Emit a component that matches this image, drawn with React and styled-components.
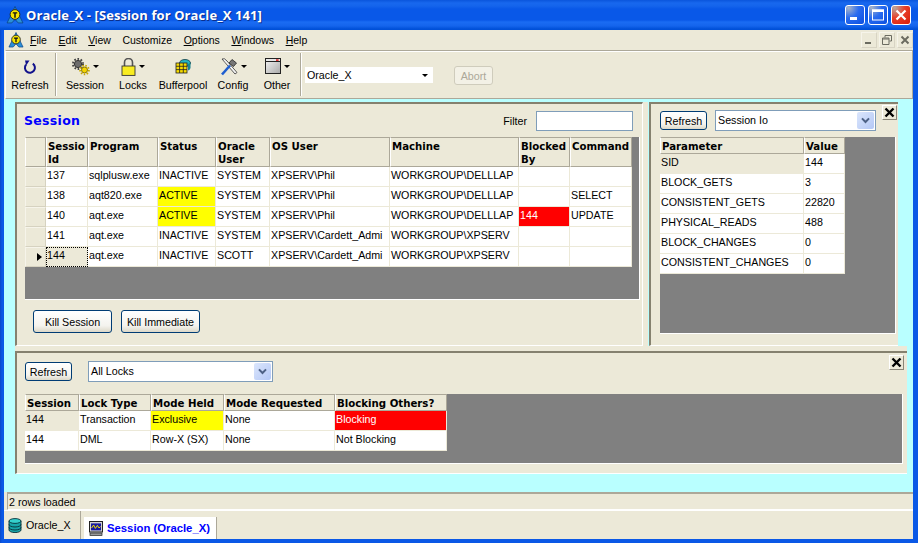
import React from 'react'
import styled, { createGlobalStyle } from 'styled-components'

const cream = '#ece9d8'
const edge = '#aca899'

const GlobalStyle = createGlobalStyle`
  html, body { margin: 0; padding: 0; background: #0a52dc; }
  body { font-family: "Liberation Sans", Arial, sans-serif; font-size: 10.7px; color: #000; }
`

const sessionCols = [21, 42, 70, 58, 54, 120, 129, 51, 62]
const sessionHead = ['', 'Sessio\nId', 'Program', 'Status', 'Oracle\nUser', 'OS User', 'Machine', 'Blocked\nBy', 'Command']
const sessionRows = [
  ['137', 'sqlplusw.exe', 'INACTIVE', 'SYSTEM', 'XPSERV\\Phil', 'WORKGROUP\\DELLLAP', '', ''],
  ['138', 'aqt820.exe', 'ACTIVE', 'SYSTEM', 'XPSERV\\Phil', 'WORKGROUP\\DELLLAP', '', 'SELECT'],
  ['140', 'aqt.exe', 'ACTIVE', 'SYSTEM', 'XPSERV\\Phil', 'WORKGROUP\\DELLLAP', '144', 'UPDATE'],
  ['141', 'aqt.exe', 'INACTIVE', 'SYSTEM', 'XPSERV\\Cardett_Admi', 'WORKGROUP\\XPSERV', '', ''],
  ['144', 'aqt.exe', 'INACTIVE', 'SCOTT', 'XPSERV\\Cardett_Admi', 'WORKGROUP\\XPSERV', '', ''],
]

const ioCols = [144, 41]
const ioRows = [
  ['SID', '144'],
  ['BLOCK_GETS', '3'],
  ['CONSISTENT_GETS', '22820'],
  ['PHYSICAL_READS', '488'],
  ['BLOCK_CHANGES', '0'],
  ['CONSISTENT_CHANGES', '0'],
]

const lockCols = [54, 72, 73, 111, 112]
const lockHead = ['Session', 'Lock Type', 'Mode Held', 'Mode Requested', 'Blocking Others?']
const lockRows = [
  ['144', 'Transaction', 'Exclusive', 'None', 'Blocking'],
  ['144', 'DML', 'Row-X (SX)', 'None', 'Not Blocking'],
]

const menus = [
  ['F', 'ile'],
  ['E', 'dit'],
  ['V', 'iew'],
  ['', 'Customize'],
  ['O', 'ptions'],
  ['W', 'indows'],
  ['H', 'elp'],
]

function AppLogo({ size = 17 }) {
  return (
    <svg width={size} height={size} viewBox="0 0 17 17">
      <path d="M8.5 0.5 L16 16 L11.5 16 L8.5 12.5 L5.5 16 L1 16 Z" fill="#2a8fd8" stroke="#0a3f80" strokeWidth="0.7" />
      <circle cx="8.5" cy="8" r="4.6" fill="#f6e400" stroke="#222" strokeWidth="0.9" />
      <path d="M6.4 5.8 H10.6 V7.1 H9.2 V11 H7.8 V7.1 H6.4 Z" fill="#111" />
    </svg>
  )
}

function RefreshIcon() {
  return (
    <svg width="16" height="18" viewBox="0 0 16 18">
      <path d="M10.8 5.6 A5 5 0 1 1 4 6.6" fill="none" stroke="#12128c" strokeWidth="2" />
      <path d="M3 2.5 L7.5 2.5 L4.2 7.5 Z" fill="#12128c" />
    </svg>
  )
}

function GearsIcon() {
  return (
    <svg width="18" height="18" viewBox="0 0 18 18">
      <circle cx="6" cy="6" r="3.6" fill="#6d6d6d" stroke="#333" strokeWidth="1" />
      <circle cx="6" cy="6" r="5" fill="none" stroke="#444" strokeWidth="2" strokeDasharray="1.6 1.6" />
      <circle cx="12.5" cy="12" r="3" fill="#f3d400" stroke="#6b5c00" strokeWidth="0.8" />
      <circle cx="12.5" cy="12" r="4.4" fill="none" stroke="#c8a800" strokeWidth="1.8" strokeDasharray="1.5 1.5" />
    </svg>
  )
}

function LockIcon() {
  return (
    <svg width="15" height="18" viewBox="0 0 15 18">
      <path d="M3.5 8 V4.5 A4 4 0 0 1 11.5 4.5 V8" fill="none" stroke="#555" strokeWidth="1.6" />
      <rect x="1" y="8" width="13" height="9.4" fill="#f8ec20" stroke="#333" strokeWidth="0.9" />
    </svg>
  )
}

function BufferIcon() {
  return (
    <svg width="16" height="16" viewBox="0 0 16 16">
      <ellipse cx="10" cy="5" rx="5.5" ry="3.5" fill="#25b5c0" stroke="#0a3a44" strokeWidth="0.8" />
      <path d="M15.5 5 V10 Q15 12 13 12.5 V6 Z" fill="#1a8490" />
      <rect x="1" y="5" width="11" height="10" fill="#f7dc00" stroke="#222" strokeWidth="0.8" />
      <path d="M4.6 5 V15 M8.3 5 V15 M1 8.3 H12 M1 11.6 H12" stroke="#222" strokeWidth="0.8" />
    </svg>
  )
}

function ToolsIcon() {
  return (
    <svg width="18" height="18" viewBox="0 0 18 18">
      <path d="M2 1 L5 4.5 L15 16 L17 14.5 L7 3 L4.5 0.8 Z" fill="#f4f4f4" stroke="#333" strokeWidth="0.8" />
      <path d="M2 16.5 L10 7.5" stroke="#1f5fd0" strokeWidth="2.6" />
      <path d="M9 5 L12 1.5 L16.5 5 L13.5 8.5 Z" fill="#777" stroke="#222" strokeWidth="0.8" />
    </svg>
  )
}

function WindowIcon() {
  return (
    <svg width="16" height="16" viewBox="0 0 16 16">
      <defs>
        <linearGradient id="winFill" x1="0" y1="0" x2="1" y2="1">
          <stop offset="0" stopColor="#f5f5f5" />
          <stop offset="1" stopColor="#a9a9a9" />
        </linearGradient>
      </defs>
      <rect x="0.5" y="0.5" width="15" height="15" fill="url(#winFill)" stroke="#222" />
      <rect x="1" y="1" width="14" height="2.5" fill="#e8e8e8" />
      <path d="M0.5 3.5 H15.5" stroke="#222" />
      <rect x="11" y="1.3" width="2.6" height="1.6" fill="#d22" />
    </svg>
  )
}

function DbIcon() {
  return (
    <svg width="14" height="15" viewBox="0 0 14 15">
      <path d="M1 3 V12 A6 2.6 0 0 0 13 12 V3 Z" fill="#17a5a8" stroke="#062f38" strokeWidth="0.9" />
      <ellipse cx="7" cy="3" rx="6" ry="2.4" fill="#35d0cc" stroke="#062f38" strokeWidth="0.9" />
      <path d="M1 6.4 A6 2.6 0 0 0 13 6.4 M1 9.4 A6 2.6 0 0 0 13 9.4" fill="none" stroke="#062f38" strokeWidth="0.9" />
    </svg>
  )
}

function MonitorIcon() {
  return (
    <svg width="14" height="15" viewBox="0 0 14 15">
      <rect x="0.5" y="0.5" width="13" height="10.5" fill="#d0d0d0" stroke="#222" />
      <rect x="2" y="2.4" width="10" height="7" fill="#1818a0" />
      <path d="M2.6 7 L4.6 4 L6.4 7.4 L8.4 4.4 L10 7 L11.6 5.6" fill="none" stroke="#f4e000" strokeWidth="1" />
      <rect x="1" y="12" width="12" height="2.4" fill="#9a9a9a" stroke="#222" strokeWidth="0.7" />
    </svg>
  )
}

function Chevron() {
  return (
    <svg width="9" height="7" viewBox="0 0 9 7">
      <path d="M1 1.4 L4.5 5 L8 1.4" fill="none" stroke="#4d6185" strokeWidth="2" />
    </svg>
  )
}

function GridCell({ value, frozen, blockedCol }) {
  const tone = value === 'ACTIVE' || value === 'Exclusive'
    ? 'yellow'
    : (blockedCol && value === '144') || value === 'Blocking'
      ? 'red'
      : frozen
        ? 'cream'
        : 'plain'
  return <Cell $tone={tone}>{value}</Cell>
}

function Select({ value, width }) {
  return (
    <SelectBox $width={width}>
      <SelectText>{value}</SelectText>
      <SelectArrow><Chevron /></SelectArrow>
    </SelectBox>
  )
}

function App() {
  return (
    <>
      <GlobalStyle />
      <Win>
        <TitleBar>
          <AppLogo size={18} />
          <TitleText>Oracle_X - [Session for Oracle_X 141]</TitleText>
          <CaptionGroup>
            <CaptionBtn>
              <svg width="18" height="18" viewBox="0 0 18 18"><rect x="4" y="11" width="7" height="3" fill="#fff" /></svg>
            </CaptionBtn>
            <CaptionBtn>
              <svg width="18" height="18" viewBox="0 0 18 18"><rect x="3.5" y="4" width="11" height="10" fill="none" stroke="#fff" /><rect x="3" y="3.5" width="12" height="2.5" fill="#fff" /></svg>
            </CaptionBtn>
            <CaptionBtn $close>
              <svg width="18" height="18" viewBox="0 0 18 18"><path d="M4.5 4.5 L13.5 13.5 M13.5 4.5 L4.5 13.5" stroke="#fff" strokeWidth="2.2" /></svg>
            </CaptionBtn>
          </CaptionGroup>
        </TitleBar>

        <Body>
          <MenuBar>
            <AppLogo size={16} />
            <MenuList>
              {menus.map(([key, rest]) => (
                <MenuItem key={rest}><u>{key}</u>{rest}</MenuItem>
              ))}
            </MenuList>
            <MdiGroup>
              <MdiBtn>
                <svg width="12" height="12" viewBox="0 0 12 12"><rect x="2" y="8" width="6" height="2" fill="#6b6b60" /></svg>
              </MdiBtn>
              <MdiBtn>
                <svg width="12" height="12" viewBox="0 0 12 12"><path d="M4 3.5 V1.5 H10.5 V7 H8.5 M1.5 4 H8 V10.5 H1.5 Z M1.5 5 H8" fill="none" stroke="#6b6b60" /></svg>
              </MdiBtn>
              <MdiBtn>
                <svg width="12" height="12" viewBox="0 0 12 12"><path d="M2.5 2.5 L9.5 9.5 M9.5 2.5 L2.5 9.5" stroke="#6b6b60" strokeWidth="2" /></svg>
              </MdiBtn>
            </MdiGroup>
          </MenuBar>

          <ToolBar>
            <ToolBtn $w={44}>
              <ToolIcon><RefreshIcon /></ToolIcon>
              Refresh
            </ToolBtn>
            <ToolSep $after={4} />
            <ToolBtn $w={48}>
              <ToolIcon><GearsIcon /><DropMark /></ToolIcon>
              Session
            </ToolBtn>
            <ToolBtn $w={48}>
              <ToolIcon><LockIcon /><DropMark /></ToolIcon>
              Locks
            </ToolBtn>
            <ToolBtn $w={52}>
              <ToolIcon><BufferIcon /></ToolIcon>
              Bufferpool
            </ToolBtn>
            <ToolBtn $w={48}>
              <ToolIcon><ToolsIcon /><DropMark /></ToolIcon>
              Config
            </ToolBtn>
            <ToolBtn $w={40}>
              <ToolIcon><WindowIcon /><DropMark /></ToolIcon>
              Other
            </ToolBtn>
            <ToolSep $after={3} />
            <ToolCombo>
              <span>Oracle_X</span>
              <ComboMark />
            </ToolCombo>
            <AbortBtn>Abort</AbortBtn>
          </ToolBar>

          <Client>
            <TopRow>
              <SessionPanel>
                <SessionHeader>
                  <PanelTitle>Session</PanelTitle>
                  <FilterLabel>Filter</FilterLabel>
                  <FilterInput />
                </SessionHeader>
                <Grid $height={163}>
                  <HeadRow $cols={sessionCols} $height={30}>
                    {sessionHead.map((h, i) => <HeadCell key={i}>{h}</HeadCell>)}
                  </HeadRow>
                  {sessionRows.map((row, r) => (
                    <Row key={r} $cols={sessionCols}>
                      <RowHeader>{r === 4 && <RowMarker />}</RowHeader>
                      {row.map((value, c) =>
                        r === 4 && c === 0
                          ? <FocusCell key={c}>{value}</FocusCell>
                          : <GridCell key={c} value={value} blockedCol={c === 6} />
                      )}
                    </Row>
                  ))}
                </Grid>
                <KillRow>
                  <Button $w={79} $h={23}>Kill Session</Button>
                  <Button $w={79} $h={23}>Kill Immediate</Button>
                </KillRow>
              </SessionPanel>

              <Splitter />

              <IoPanel>
                <CloseBtn $top={1} $right={1}>
                  <svg width="11" height="11" viewBox="0 0 11 11"><path d="M1.5 1.5 L9.5 9.5 M9.5 1.5 L1.5 9.5" stroke="#000" strokeWidth="2.4" /></svg>
                </CloseBtn>
                <IoHeader>
                  <Button $w={47} $h={19}>Refresh</Button>
                  <Select value="Session Io" width={161} />
                </IoHeader>
                <Grid $height={197}>
                  <HeadRow $cols={ioCols} $height={17}>
                    <HeadCell>Parameter</HeadCell>
                    <HeadCell>Value</HeadCell>
                  </HeadRow>
                  {ioRows.map((row, r) => (
                    <Row key={row[0]} $cols={ioCols}>
                      {row.map((value, c) => (
                        <GridCell key={c} value={value} frozen={r === 0 && c === 0} />
                      ))}
                    </Row>
                  ))}
                </Grid>
              </IoPanel>
            </TopRow>

            <LockDock>
              <LockPanel>
                <CloseBtn $top={2} $right={3}>
                  <svg width="11" height="11" viewBox="0 0 11 11"><path d="M1.5 1.5 L9.5 9.5 M9.5 1.5 L1.5 9.5" stroke="#000" strokeWidth="2.4" /></svg>
                </CloseBtn>
                <LockHeader>
                  <Button $w={47} $h={19}>Refresh</Button>
                  <Select value="All Locks" width={185} />
                </LockHeader>
                <Grid $height={70}>
                  <HeadRow $cols={lockCols} $height={17}>
                    {lockHead.map(h => <HeadCell key={h}>{h}</HeadCell>)}
                  </HeadRow>
                  {lockRows.map((row, r) => (
                    <Row key={r} $cols={lockCols}>
                      {row.map((value, c) => (
                        <GridCell key={c} value={value} frozen={r === 0 && c === 0} />
                      ))}
                    </Row>
                  ))}
                </Grid>
              </LockPanel>
            </LockDock>
          </Client>

          <StatusBar>
            <StatusText>2 rows loaded</StatusText>
          </StatusBar>

          <TabBar>
            <Tab $w={77}><DbIcon />Oracle_X</Tab>
            <Tab $w={133} $active><MonitorIcon />Session (Oracle_X)</Tab>
          </TabBar>
        </Body>
      </Win>
    </>
  )
}

const Win = styled.div`
  width: 918px;
  height: 543px;
  display: flex;
  flex-direction: column;
  overflow: hidden;
  background: linear-gradient(90deg, #0a48c8 0, #0a58e6 2px, #0a58e6 100%);
`

const TitleBar = styled.div`
  height: 30px;
  flex: none;
  display: flex;
  align-items: center;
  padding: 0 7px 0 6px;
  box-sizing: border-box;
  background: linear-gradient(180deg, #0a55dc 0, #1868ee 3px, #1464ec 6px, #0958e8 9px, #0958e8 20px, #1a6cf3 22px, #1464ec 26px, #0050d8 29px);
`

const TitleText = styled.div`
  margin-left: 2px;
  font-family: "Open Sans", "Liberation Sans", sans-serif;
  font-weight: 700;
  font-size: 13px;
  letter-spacing: 0.1px;
  color: #fff;
  text-shadow: 1px 1px 0 #0b2f8c;
`

const CaptionGroup = styled.div`
  margin-left: auto;
  display: flex;
  gap: 3px;
`

const CaptionBtn = styled.div`
  width: 20px;
  height: 20px;
  box-sizing: border-box;
  border: 1px solid #fff;
  border-radius: 3px;
  display: flex;
  align-items: center;
  justify-content: center;
  background: ${p => (p.$close
    ? 'radial-gradient(circle at 15% 10%, #b8a8a0 0, #e8402a 45%, #d81c08 100%)'
    : 'radial-gradient(circle at 15% 10%, #a8b4c8 0, #2a6cf0 45%, #0a4ee0 100%)')};
`

const Body = styled.div`
  flex: 1;
  margin: 0 5px 4px 4px;
  display: flex;
  flex-direction: column;
  min-height: 0;
  background: ${cream};
`

const MenuBar = styled.div`
  height: 20px;
  flex: none;
  display: flex;
  align-items: center;
  padding-left: 4px;
`

const MenuList = styled.div`
  margin-left: 6px;
  display: flex;
  gap: 11.6px;
`

const MenuItem = styled.span`
  font-size: 10.5px;
`

const MdiGroup = styled.div`
  margin-left: auto;
  display: flex;
  gap: 2px;
`

const MdiBtn = styled.div`
  width: 16px;
  height: 16px;
  display: flex;
  align-items: center;
  justify-content: center;
  border-right: 1px solid #d8d4c4;
  border-bottom: 1px solid #d8d4c4;
  border-top: 1px solid #f6f4ea;
  border-left: 1px solid #f6f4ea;
  box-sizing: border-box;
`

const ToolBar = styled.div`
  height: 49px;
  flex: none;
  box-sizing: border-box;
  display: flex;
  margin-left: 1px;
  padding-left: 2px;
  border-top: 1px solid ${edge};
  border-bottom: 1px solid ${edge};
  border-left: 1px solid #fff;
  border-right: 1px solid ${edge};
  box-shadow: inset 0 1px 0 #fff;
`

const ToolBtn = styled.div`
  width: ${p => p.$w}px;
  flex: none;
  display: flex;
  flex-direction: column;
  align-items: center;
  padding-top: 7px;
`

const ToolIcon = styled.div`
  height: 21px;
  display: flex;
  align-items: flex-start;
  justify-content: center;
  gap: 3px;
`

const DropMark = styled.span`
  width: 0;
  height: 0;
  margin-top: 7px;
  border-left: 3px solid transparent;
  border-right: 3px solid transparent;
  border-top: 3px solid #000;
`

const ToolSep = styled.div`
  width: 1px;
  height: 43px;
  flex: none;
  margin: 2px ${p => p.$after}px 0 3px;
  border-right: 1px solid #fff;
  background: ${edge};
`

const ToolCombo = styled.div`
  width: 128px;
  height: 16px;
  margin-top: 16px;
  flex: none;
  box-sizing: border-box;
  padding: 0 5px 0 2px;
  display: flex;
  align-items: center;
  justify-content: space-between;
  background: #fff;
`

const ComboMark = styled.span`
  width: 0;
  height: 0;
  border-left: 3px solid transparent;
  border-right: 3px solid transparent;
  border-top: 3px solid #000;
`

const AbortBtn = styled.div`
  width: 39px;
  height: 19px;
  margin: 15px 0 0 21px;
  flex: none;
  box-sizing: border-box;
  border: 1px solid #cfccbc;
  border-radius: 3px;
  display: flex;
  align-items: center;
  justify-content: center;
  color: ${edge};
  background: #f3f1e6;
`

const Client = styled.div`
  height: 393px;
  flex: none;
  box-sizing: border-box;
  padding: 3px 0 0 11px;
  display: flex;
  flex-direction: column;
  background: #b9ffff;
`

const TopRow = styled.div`
  height: 244px;
  flex: none;
  display: flex;
`

const Panel = styled.div`
  position: relative;
  box-sizing: border-box;
  flex: none;
  display: flex;
  flex-direction: column;
  background: ${cream};
  border-top: 2px solid #85816f;
  border-left: 2px solid #85816f;
  border-bottom: 1px solid #fff;
`

const SessionPanel = styled(Panel)`
  width: 628px;
  padding: 0 2px 0 8px;
  border-right: 1px solid #fff;
`

const SessionHeader = styled.div`
  height: 33px;
  display: flex;
  align-items: center;
  padding-right: 7px;
`

const PanelTitle = styled.div`
  font-family: "DejaVu Sans", Verdana, sans-serif;
  font-weight: 700;
  font-size: 12.5px;
  color: #0000ff;
  margin-left: -1px;
  margin-right: auto;
  letter-spacing: 0.3px;
`

const FilterLabel = styled.span`
  margin-right: 9px;
`

const FilterInput = styled.div`
  width: 97px;
  height: 20px;
  box-sizing: border-box;
  border: 1px solid #7f9db9;
  background: #fff;
`

const Grid = styled.div`
  height: ${p => p.$height}px;
  flex: none;
  box-sizing: border-box;
  background: #808080;
  border-bottom: 1px solid #fff;
  border-right: 1px solid #fff;
  overflow: hidden;
`

const Row = styled.div`
  display: grid;
  grid-template-columns: ${p => p.$cols.map(c => `${c}px`).join(' ')};
  height: 20px;
  width: fit-content;
`

const HeadRow = styled(Row)`
  height: ${p => p.$height}px;
`

const HeadCell = styled.div`
  box-sizing: border-box;
  padding: 2px 0 0 1px;
  overflow: hidden;
  white-space: pre;
  font-family: "DejaVu Sans", Verdana, sans-serif;
  font-weight: 700;
  font-size: 10.2px;
  line-height: 13px;
  background: ${cream};
  border-top: 1px solid ${edge};
  border-right: 1px solid ${edge};
  border-bottom: 1px solid ${edge};
  border-left: 1px solid #fff;
`

const toneBg = { plain: '#fff', cream, yellow: '#ffff00', red: '#ff0000' }

const Cell = styled.div`
  box-sizing: border-box;
  padding: 0 0 0 1px;
  overflow: hidden;
  white-space: nowrap;
  line-height: 16px;
  background: ${p => toneBg[p.$tone]};
  color: ${p => (p.$tone === 'red' ? '#fff' : '#000')};
  border-right: 1px solid ${cream};
  border-bottom: 1px solid ${cream};
`

const FocusCell = styled(Cell)`
  background: ${cream};
  outline: 1px dotted #000;
  outline-offset: -1px;
`

const RowHeader = styled.div`
  box-sizing: border-box;
  display: flex;
  align-items: center;
  justify-content: flex-end;
  padding-right: 3px;
  background: ${cream};
  border-top: 1px solid #f6f4ea;
  border-left: 1px solid #f6f4ea;
  border-right: 1px solid #d6d2c0;
  border-bottom: 1px solid #d6d2c0;
`

const RowMarker = styled.span`
  width: 0;
  height: 0;
  border-top: 4px solid transparent;
  border-bottom: 4px solid transparent;
  border-left: 5px solid #000;
`

const KillRow = styled.div`
  display: flex;
  gap: 9px;
  padding: 10px 0 0 8px;
`

const Button = styled.div`
  width: ${p => p.$w}px;
  height: ${p => p.$h}px;
  flex: none;
  box-sizing: border-box;
  border: 1px solid #003c74;
  border-radius: 3px;
  display: flex;
  align-items: center;
  justify-content: center;
  background: linear-gradient(180deg, #ffffff 0, #f4f3ee 70%, #dcd8c8 100%);
`

const Splitter = styled.div`
  width: 5px;
  flex: none;
  margin-right: 1px;
  background: ${cream};
`

const IoPanel = styled(Panel)`
  width: 249px;
  padding: 6px 2px 0 9px;
`

const IoHeader = styled.div`
  height: 27px;
  flex: none;
  box-sizing: border-box;
  display: flex;
  align-items: flex-start;
  gap: 8px;
  padding-top: 1px;
`

const CloseBtn = styled.div`
  position: absolute;
  top: ${p => p.$top}px;
  right: ${p => p.$right}px;
  width: 15px;
  height: 15px;
  box-sizing: border-box;
  display: flex;
  align-items: center;
  justify-content: center;
  border-top: 1px solid #fff;
  border-left: 1px solid #fff;
  border-right: 1px solid #8a8678;
  border-bottom: 1px solid #8a8678;
  background: ${cream};
`

const SelectBox = styled.div`
  width: ${p => p.$width}px;
  height: 21px;
  flex: none;
  box-sizing: border-box;
  margin-top: -1px;
  padding: 0 1px 1px 2px;
  display: flex;
  align-items: center;
  border: 1px solid #7f9db9;
  background: #fff;
`

const SelectText = styled.span`
  flex: 1;
`

const SelectArrow = styled.span`
  width: 17px;
  height: 17px;
  display: flex;
  align-items: center;
  justify-content: center;
  border-radius: 2px;
  background: linear-gradient(135deg, #dbe6fc 0, #b4c8f6 100%);
`

const LockDock = styled.div`
  width: 892px;
  height: 128px;
  flex: none;
  box-sizing: border-box;
  padding-top: 5px;
  background: ${cream};
  display: flex;
`

const LockPanel = styled(Panel)`
  width: 100%;
  padding: 0 4px 0 8px;
`

const LockHeader = styled.div`
  height: 41px;
  flex: none;
  box-sizing: border-box;
  display: flex;
  align-items: flex-start;
  gap: 16px;
  padding-top: 9px;
`

const StatusBar = styled.div`
  height: 18px;
  flex: none;
  box-sizing: border-box;
  display: flex;
  align-items: center;
  margin-left: 3px;
  padding-left: 1px;
  border-top: 2px solid ${edge};
  border-left: 1px solid ${edge};
  border-bottom: 1px solid #fff;
`

const StatusText = styled.span`
  font-size: 10.7px;
`

const TabBar = styled.div`
  flex: 1;
  display: flex;
  align-items: flex-end;
  gap: 3px;
  border-top: 1px solid #fff;
`

const Tab = styled.div`
  width: ${p => p.$w}px;
  height: ${p => (p.$active ? 22 : 28)}px;
  flex: none;
  box-sizing: border-box;
  display: flex;
  align-items: center;
  gap: 4px;
  white-space: nowrap;
  padding-left: ${p => (p.$active ? 5 : 4)}px;
  margin-bottom: 1px;
  font-weight: ${p => (p.$active ? 700 : 400)};
  font-size: ${p => (p.$active ? 11.3 : 10.7)}px;
  color: ${p => (p.$active ? '#0000ff' : '#000')};
  background: ${p => (p.$active ? '#fff' : cream)};
  border-right: 1px solid ${edge};
`

export default App
